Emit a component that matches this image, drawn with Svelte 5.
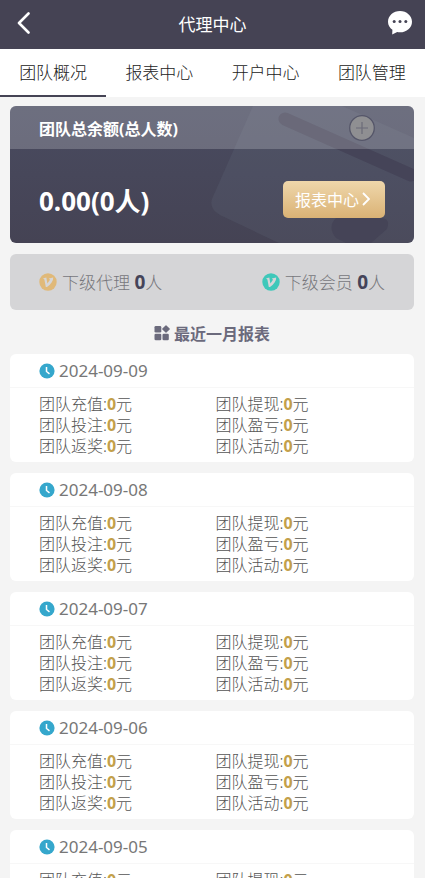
<script>
	const tabs = ['团队概况', '报表中心', '开户中心', '团队管理'];
	let active = $state(0);

	const members = [
		{ label: '下级代理', count: 0, kind: 'agent' },
		{ label: '下级会员', count: 0, kind: 'user' }
	];

	const fields = ['团队充值', '团队提现', '团队投注', '团队盈亏', '团队返奖', '团队活动'];
	const dates = ['2024-09-09', '2024-09-08', '2024-09-07', '2024-09-06', '2024-09-05'];
	const reports = dates.map((date) => ({
		date,
		items: fields.map((label) => ({ label, value: 0 }))
	}));
</script>

<div class="page">
	<header class="topbar">
		<button class="icon-btn" aria-label="返回">
			<svg width="14" height="22" viewBox="0 0 14 22">
				<path d="M11.5 1.5 2 11 11.5 20.5" fill="none" stroke="#fff" stroke-width="2.6" stroke-linecap="round" stroke-linejoin="round" />
			</svg>
		</button>
		<h1>代理中心</h1>
		<button class="icon-btn chat" aria-label="客服">
			<svg width="24" height="24" viewBox="0 0 24 24">
				<path d="M12 0C5.4 0 0 4.7 0 10.7c0 3.3 1.7 6.2 4.4 8.1L4.2 23.500l5-2.5c.9.2 1.8.3 2.800.3 6.6 0 12-4.7 12-10.600S18.6 0 12 0z" fill="#fff" />
				<circle cx="6.2" cy="10.5" r="1.5" fill="#454354" />
				<circle cx="12" cy="10.5" r="1.5" fill="#454354" />
				<circle cx="17.8" cy="10.5" r="1.5" fill="#454354" />
			</svg>
		</button>
	</header>

	<nav class="tabs">
		{#each tabs as tab, i}
			<button class="tab" class:active={active === i} onclick={() => (active = i)}>{tab}</button>
		{/each}
	</nav>

	<main>
		<section class="balance">
			<svg class="art" viewBox="0 0 404 137" preserveAspectRatio="xMaxYMin slice" aria-hidden="true">
				<path d="M243 0H332L404 32V137H269L210 109Q199 103 202 93Z" fill="#7d8ba0" fill-opacity=".12" />
				<path d="M275 13 401 69" stroke="#454458" stroke-width="13" stroke-linecap="round" />
				<path d="M326 112H370Q381 112 377 123L361 137H336L326 132Q317 121 326 112Z" fill="#454457" />
			</svg>
			<div class="balance-head">
				<h2>团队总余额(总人数)</h2>
				<button class="plus" aria-label="展开">
					<svg width="26" height="26" viewBox="0 0 26 26">
						<circle cx="13" cy="13" r="12.3" fill="#8f8f92" stroke="#555669" stroke-width="1.3" />
						<path d="M7 13H19M13 7V19" stroke="#6b6b78" stroke-width="1.2" />
					</svg>
				</button>
			</div>
			<div class="balance-body">
				<strong>0.00(0人)</strong>
				<button class="report-btn">
					报表中心
					<svg width="8" height="14" viewBox="0 0 8 14">
						<path d="M1 1 7 7 1 13" fill="none" stroke="#fff" stroke-width="1.8" />
					</svg>
				</button>
			</div>
		</section>

		<section class="members">
			{#each members as m}
				<div class="member">
					<svg class={m.kind} width="18" height="18" viewBox="0 0 18 18">
						<circle cx="9" cy="9" r="8.7" fill="currentColor" />
						<path d="M4 5.4 7.3 4.6 8.4 10.4 11 6.8 9.8 5.6 14.2 4.6Q14.4 7 12.6 9.4 10.2 12.8 8 14H6.8L5.4 6.6Z" fill="#d6d6d8" />
					</svg>
					<span>{m.label} <b>{m.count}</b>人</span>
				</div>
			{/each}
		</section>

		<h2 class="section-title">
			<svg width="16" height="16" viewBox="0 0 16 16" fill="#6b6a7c">
				<rect x="0.5" y="1" width="6.8" height="6.6" rx="1.3" />
				<rect x="0.5" y="8.7" width="6.8" height="6.6" rx="1.3" />
				<rect x="8.5" y="8.7" width="6.3" height="6.6" rx="1.3" />
				<path d="M12 .8 15.2 4 12 7.2 8.8 4Z" stroke="#6b6a7c" stroke-width="1.2" stroke-linejoin="round" />
			</svg>
			最近一月报表
		</h2>

		{#each reports as report}
			<article class="report">
				<h3>
					<svg width="16" height="16" viewBox="0 0 16 16">
						<circle cx="8" cy="8" r="7.6" fill="#35a7cc" />
						<path d="M7.5 4V8.5L10.5 10.8" fill="none" stroke="#fff" stroke-width="1.5" />
					</svg>
					{report.date}
				</h3>
				<div class="report-grid">
					{#each report.items as item}
						<span>{item.label}:<b>{item.value}</b>元</span>
					{/each}
				</div>
			</article>
		{/each}
	</main>
</div>

<style>
	:global(body) {
		background: #f4f4f4;
	}
	.page {
		font-family: "Noto Sans", "Noto Sans CJK SC", sans-serif;
		font-size: 16px;
		font-weight: 300;
		color: #666;
	}
	button {
		border: 0;
		padding: 0;
		background: none;
		font: inherit;
		color: inherit;
		cursor: pointer;
	}
	b, strong {
		font-weight: 700;
	}
	svg {
		display: block;
		flex: none;
	}
	h1, h2, h3 {
		margin: 0;
		font-size: 16px;
	}
	.topbar {
		display: grid;
		grid-template-columns: 48px 1fr 48px;
		align-items: center;
		height: 49px;
		background: #454354;
		color: #fff;
	}
	.topbar h1 {
		padding-bottom: 2px;
		font-size: 17px;
		font-weight: 400;
		text-align: center;
	}
	.icon-btn {
		display: flex;
		padding: 0 17px 4px;
	}
	.icon-btn.chat {
		padding: 0 11px 4px;
	}
	.tabs {
		display: flex;
		height: 48px;
		background: #fff;
	}
	.tab {
		flex: 1;
		padding-bottom: 2px;
		border-bottom: 2px solid transparent;
		font-size: 17px;
		color: #222;
	}
	.tab.active {
		border-color: #454354;
	}
	main {
		padding: 9px 11px 11px 10px;
	}
	.balance {
		position: relative;
		overflow: hidden;
		border-radius: 6px;
		background: linear-gradient(#494b60, #454354);
		color: #fff;
	}
	.art {
		position: absolute;
		inset: 0;
		width: 100%;
		height: 100%;
	}
	.balance-head, .balance-body {
		position: relative;
		display: flex;
		justify-content: space-between;
		align-items: center;
		padding: 0 29px;
	}
	.balance-head {
		height: 43px;
		padding-right: 39px;
		background: rgba(255, 255, 255, 0.2);
	}
	.balance-body {
		height: 82px;
		padding-top: 9px;
		padding-bottom: 3px;
	}
	.balance strong {
		padding-top: 2px;
		font-size: 26px;
	}
	.report-btn {
		display: flex;
		align-items: center;
		gap: 3px;
		height: 37px;
		padding: 0 15px 0 12px;
		border-radius: 5px;
		background: linear-gradient(#efd7ab, #dab275);
		font-weight: 400;
		color: #fff;
	}
	.members {
		display: flex;
		justify-content: space-between;
		align-items: center;
		height: 56px;
		margin-top: 11px;
		padding: 0 29px;
		border-radius: 6px;
		background: #d5d5d7;
		font-size: 17px;
		color: #77777c;
	}
	.member {
		display: flex;
		align-items: center;
		gap: 5px;
	}
	.member b {
		font-size: 19px;
		color: #454459;
	}
	.agent {
		color: #e0b979;
	}
	.user {
		color: #3fc8ba;
	}
	.section-title {
		display: flex;
		justify-content: center;
		align-items: center;
		gap: 4px;
		height: 44px;
		padding-top: 2px;
		box-sizing: border-box;
		color: #6b6a7c;
	}
	.report {
		margin-bottom: 11px;
		border-radius: 6px;
		background: #fff;
	}
	.report h3 {
		display: flex;
		align-items: center;
		gap: 4px;
		height: 33px;
		padding: 0 29px;
		border-bottom: 1px solid #f7f7f7;
		font-size: 17px;
		font-weight: 400;
		color: #777;
	}
	.report-grid {
		display: grid;
		grid-template-columns: 1fr 1fr;
		padding: 6px 22px 5px 29px;
		line-height: 21px;
		color: #555;
	}
	.report-grid b {
		color: #c3a04a;
	}
</style>
